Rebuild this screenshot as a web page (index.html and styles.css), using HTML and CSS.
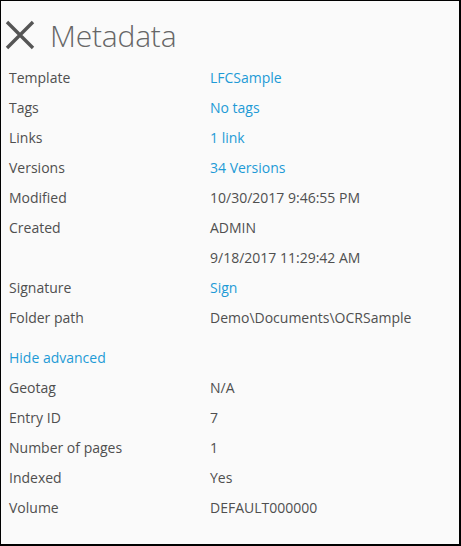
FILE: index.html
```html
<!DOCTYPE html>
<html>
<head>
<meta charset="utf-8">
<link rel="stylesheet" href="styles.css">
</head>
<body>
<div class="panel">
  <div class="header">
    <svg class="close" width="30" height="30" viewBox="0 0 30 30"><path d="M2 2 L28 28 M28 2 L2 28" stroke="#555" stroke-width="3.4" fill="none"/></svg>
    <span class="title">Metadata</span>
  </div>
  <div class="rows">
    <div class="row"><span class="label">Template</span><span class="value link">LFCSample</span></div>
    <div class="row"><span class="label">Tags</span><span class="value link">No tags</span></div>
    <div class="row"><span class="label">Links</span><span class="value link">1 link</span></div>
    <div class="row"><span class="label">Versions</span><span class="value link">34 Versions</span></div>
    <div class="row"><span class="label">Modified</span><span class="value">10/30/2017 9:46:55 PM</span></div>
    <div class="row"><span class="label">Created</span><span class="value">ADMIN</span></div>
    <div class="row"><span class="label"></span><span class="value">9/18/2017 11:29:42 AM</span></div>
    <div class="row"><span class="label">Signature</span><span class="value link">Sign</span></div>
    <div class="row"><span class="label">Folder path</span><span class="value">Demo\Documents\OCRSample</span></div>
  </div>
  <div class="toggle link">Hide advanced</div>
  <div class="rows">
    <div class="row"><span class="label">Geotag</span><span class="value">N/A</span></div>
    <div class="row"><span class="label">Entry ID</span><span class="value">7</span></div>
    <div class="row"><span class="label">Number of pages</span><span class="value">1</span></div>
    <div class="row"><span class="label">Indexed</span><span class="value">Yes</span></div>
    <div class="row"><span class="label">Volume</span><span class="value">DEFAULT000000</span></div>
  </div>
</div>
</body>
</html>
```
FILE: styles.css
```css
html, body {
  margin: 0;
  padding: 0;
}
body {
  width: 461px;
  height: 546px;
  font-family: "Open Sans", "Noto Sans", sans-serif;
  font-size: 14px;
  color: #4f4f4f;
}
.panel {
  box-sizing: border-box;
  width: 461px;
  height: 546px;
  background: #fafafa;
  border-style: solid;
  border-color: #000;
  border-width: 1px 2px 2px 1px;
  padding: 0 0 0 8px;
}
.header {
  box-sizing: border-box;
  display: flex;
  align-items: center;
  height: 62px;
  padding-top: 5px;
  gap: 15px;
}
.close {
  margin-left: -4px;
  flex: none;
}
.title {
  font-size: 30px;
  font-weight: 300;
  color: #666;
  letter-spacing: -0.2px;
  margin-top: 1px;
}
.row {
  display: flex;
  height: 30px;
  line-height: 30px;
}
.label {
  width: 201px;
  flex: none;
}
.link {
  color: #1e9ad6;
}
.toggle {
  height: 40px;
  line-height: 30px;
  padding-top: 10px;
  box-sizing: border-box;
}
```
